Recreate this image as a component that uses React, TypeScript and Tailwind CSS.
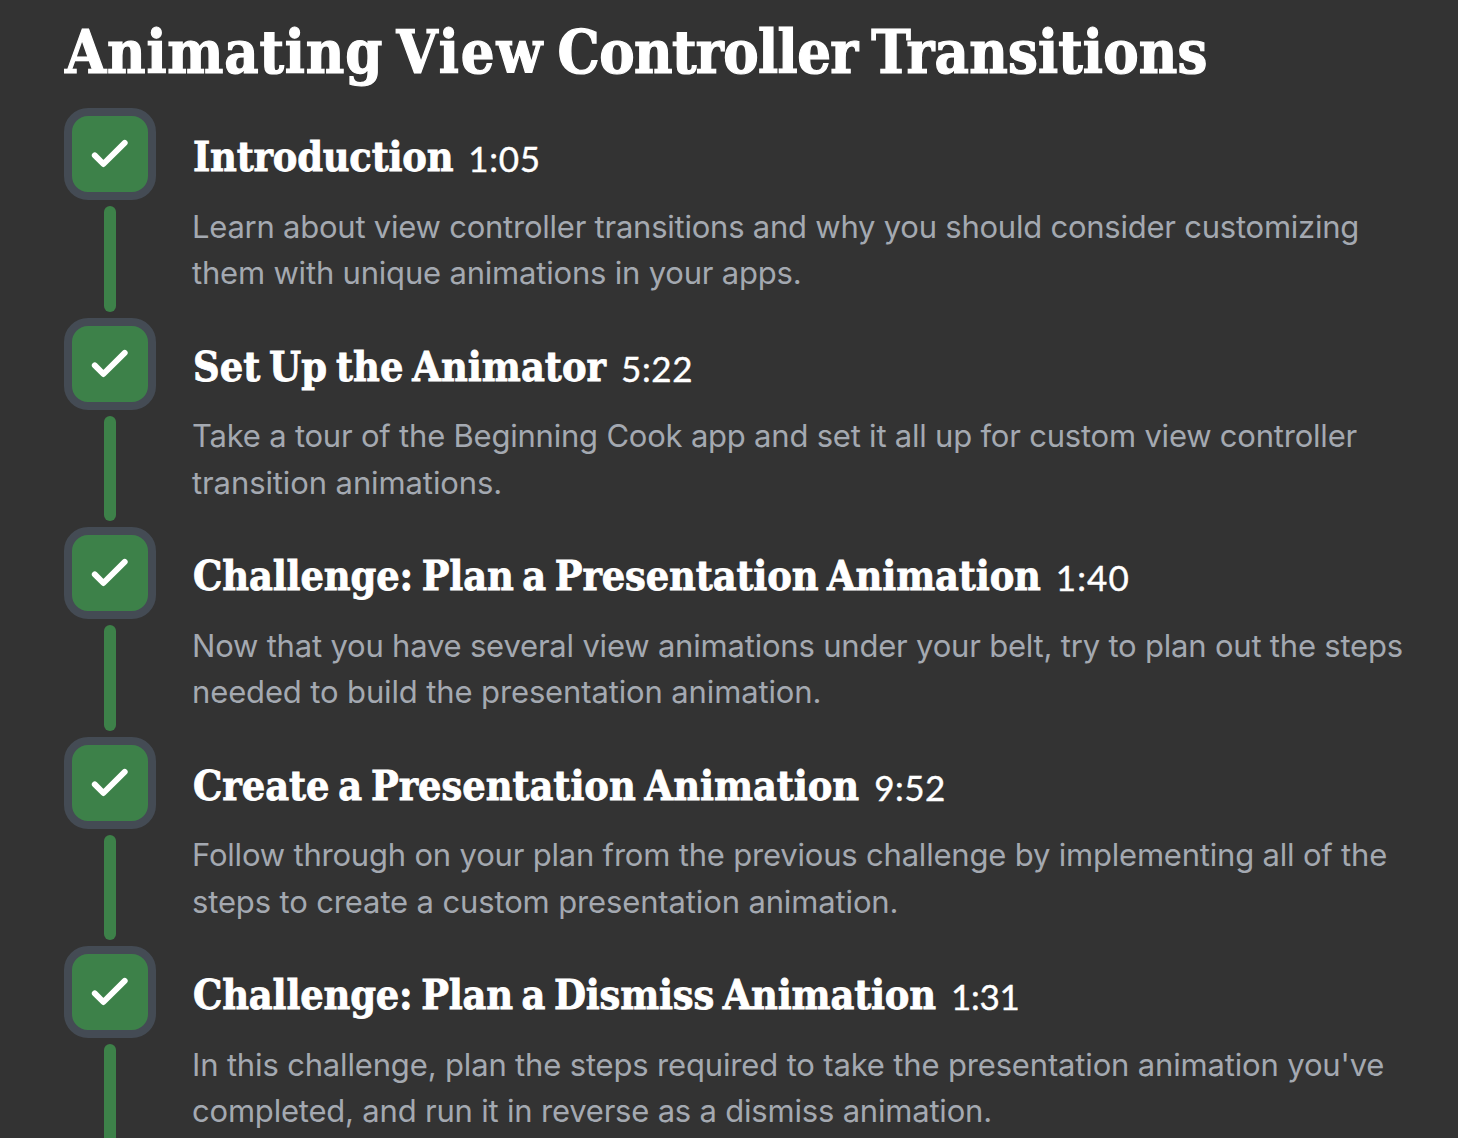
type Line = { text: string; tracking: string };
type Episode = { title: string; tracking: string; time: string; timeTracking: string; lines: Line[] };

const episodes: Episode[] = [
  {
    title: 'Introduction', tracking: 'tracking-[-0.2px]', time: '1:05', timeTracking: 'tracking-[0.7px]',
    lines: [
      { text: 'Learn about view controller transitions and why you should consider customizing', tracking: 'tracking-[-0.235px]' },
      { text: 'them with unique animations in your apps.', tracking: 'tracking-[-0.195px]' },
    ],
  },
  {
    title: 'Set Up the Animator', tracking: 'tracking-[0.03px]', time: '5:22', timeTracking: 'tracking-[0.6px]',
    lines: [
      { text: 'Take a tour of the Beginning Cook app and set it all up for custom view controller', tracking: 'tracking-[-0.215px]' },
      { text: 'transition animations.', tracking: 'tracking-[-0.1px]' },
    ],
  },
  {
    title: 'Challenge: Plan a Presentation Animation', tracking: 'tracking-[-0.13px]', time: '1:40', timeTracking: 'tracking-[1.1px]',
    lines: [
      { text: 'Now that you have several view animations under your belt, try to plan out the steps', tracking: 'tracking-[-0.2px]' },
      { text: 'needed to build the presentation animation.', tracking: 'tracking-[-0.13px]' },
    ],
  },
  {
    title: 'Create a Presentation Animation', tracking: 'tracking-[-0.03px]', time: '9:52', timeTracking: 'tracking-[0.5px]',
    lines: [
      { text: 'Follow through on your plan from the previous challenge by implementing all of the', tracking: 'tracking-[-0.195px]' },
      { text: 'steps to create a custom presentation animation.', tracking: 'tracking-[-0.135px]' },
    ],
  },
  {
    title: 'Challenge: Plan a Dismiss Animation', tracking: 'tracking-[-0.18px]', time: '1:31', timeTracking: 'tracking-[-0.3px]',
    lines: [
      { text: "In this challenge, plan the steps required to take the presentation animation you've", tracking: 'tracking-[-0.16px]' },
      { text: 'completed, and run it in reverse as a dismiss animation.', tracking: 'tracking-[-0.2px]' },
    ],
  },
];

function CheckBadge() {
  return (
    <div className="flex h-[92px] w-[92px] shrink-0 items-center justify-center rounded-[24px] border-8 border-[#444b54] bg-[#3d8149]">
      <svg width="76" height="76" viewBox="0 0 76 76" fill="none" stroke="#fff" strokeWidth="5.9" strokeLinecap="round" strokeLinejoin="round">
        <path d="M22.8 39.4 31.4 48 52.7 26.8" />
      </svg>
    </div>
  );
}

function EpisodeRow({ episode }: { episode: Episode }) {
  return (
    <li className="flex h-[209.5px] shrink-0 gap-9">
      <div className="flex flex-col items-center gap-1.5 pb-1.5">
        <CheckBadge />
        <div className="w-3 grow rounded-full bg-[#3d8149]" />
      </div>
      <div className="whitespace-nowrap pt-6">
        <div className="flex h-[50px] items-baseline gap-[15px] text-white">
          <h2 className={`pl-px font-['DejaVu_Serif_Condensed','DejaVu_Serif',serif] text-[41px] leading-[50px] font-bold [word-spacing:-4px] [-webkit-text-stroke:0.8px_#fff] ${episode.tracking}`}>
            {episode.title}
          </h2>
          <span className={`relative top-px font-[Lato,sans-serif] text-[35px] leading-[46px] [-webkit-text-stroke:0.4px_#fff] ${episode.timeTracking}`}>
            {episode.time}
          </span>
        </div>
        <p className="pt-[21.7px] font-[Inter,sans-serif] text-[31px] leading-[46.5px] text-[#a4a9b1]">
          {episode.lines.map((line) => (
            <span key={line.text} className={`block ${line.tracking}`}>{line.text}</span>
          ))}
        </p>
      </div>
    </li>
  );
}

export default function App() {
  return (
    <main className="flex h-[1138px] w-[1458px] flex-col overflow-hidden bg-[#333333] pl-16">
      <h1 className="h-[108px] shrink-0 whitespace-nowrap pl-px pt-[15px] font-['DejaVu_Serif_Condensed','DejaVu_Serif',serif] text-[59px] leading-[76px] font-bold text-white [word-spacing:-5px] [-webkit-text-stroke:1.2px_#fff]">
        <span className="tracking-[0.8px]">Animating</span>{' '}
        <span className="tracking-[1.9px]">View</span>{' '}
        <span className="tracking-[-0.6px]">Controller</span>{' '}
        <span className="tracking-[0.13px]">Transitions</span>
      </h1>
      <ul className="flex flex-col">
        {episodes.map((episode) => (
          <EpisodeRow key={episode.title} episode={episode} />
        ))}
      </ul>
    </main>
  );
}
